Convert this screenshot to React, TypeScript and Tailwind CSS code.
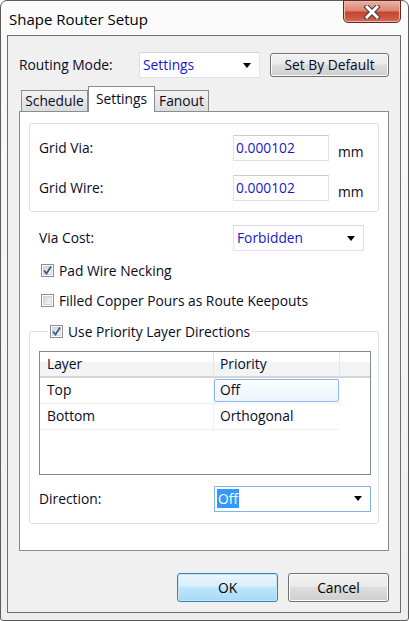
import React from 'react';

const FONT = { fontFamily: '"Open Sans", "Liberation Sans", sans-serif' };

function Arrow() {
  return (
    <svg width="8" height="5" viewBox="0 0 8 5" className="shrink-0">
      <path d="M0 0 H8 L4 5 Z" fill="#000" />
    </svg>
  );
}

function Combo({
  value,
  width,
  focused = false,
  highlighted = false,
}: {
  value: string;
  width: string;
  focused?: boolean;
  highlighted?: boolean;
}) {
  return (
    <div
      className={`${width} h-[26px] bg-white border flex items-center justify-between pl-[2px] pr-[8px] ${
        focused ? 'border-[#7eb4ea]' : 'border-[#dfe3e8] border-t-[#d2d6dc]'
      }`}
    >
      {highlighted ? (
        <span className="bg-[#3399ff] text-white px-[1px] leading-[19px]">{value}</span>
      ) : (
        <span className="text-[#1818c8] pl-[1px]">{value}</span>
      )}
      <Arrow />
    </div>
  );
}

function TextBox({ value }: { value: string }) {
  return (
    <div className="w-[96px] h-[26px] bg-white border border-[#dde1e6] border-t-[#c9ccd2] flex items-center pl-[2px] text-[#1818c8]">
      {value}
    </div>
  );
}

function Check({ checked }: { checked: boolean }) {
  return (
    <span className="relative w-[13px] h-[13px] shrink-0 border border-[#8e8f8f] bg-white p-[1px] flex">
      <span className="flex-1 border border-[#d0d3d8] bg-gradient-to-br from-[#d5d8dd] to-[#f7f7f7]" />
      {checked && (
        <svg width="11" height="11" viewBox="0 0 11 11" className="absolute left-[0px] top-[0px]">
          <path d="M2 5.5 L4.5 8.5 L9 1.5" fill="none" stroke="#3d5890" strokeWidth="1.8" />
        </svg>
      )}
    </span>
  );
}

function Button({ label, primary = false }: { label: string; primary?: boolean }) {
  return (
    <div
      className={`w-[101px] h-[29px] rounded-[3px] border flex items-center justify-center text-black ${
        primary
          ? 'border-[#3c7fb1] bg-[linear-gradient(#eaf6fd_0%,#d9f0fc_45%,#bee6fd_50%,#a7d9f5_100%)] shadow-[inset_0_0_0_1px_#c6e7f8]'
          : 'border-[#707070] bg-[linear-gradient(#f2f2f2_0%,#ebebeb_45%,#dddddd_50%,#cfcfcf_100%)] shadow-[inset_0_0_0_1px_#fcfcfc]'
      }`}
    >
      {label}
    </div>
  );
}

export default function App() {
  return (
    <div className="w-[409px] h-[621px] bg-white text-[13.8px] text-[#0a0a1e] leading-none" style={FONT}>
      <div className="w-full h-full rounded-t-[7px] rounded-b-[3px] border border-[#5b5b5b] bg-[linear-gradient(#fbfbfb,#eeeeee)] flex flex-col">
        {/* title bar */}
        <div className="h-[34px] flex justify-between pl-[8px] pr-[7px]">
          <span className="pt-[11px] text-[15px] text-[#000]">Shape Router Setup</span>
          <div className="w-[58px] h-[23px] -mt-px rounded-b-[5px] border border-[#5e2b22] bg-[linear-gradient(#eab3a7_0%,#dc8672_45%,#c7442f_55%,#d36a52_100%)] shadow-[inset_0_0_0_1px_#f0b8aa] flex items-center justify-center">
            <svg width="18" height="14" viewBox="0 0 18 14">
              <path d="M4 2 L14 12 M14 2 L4 12" stroke="#3b3b3b" strokeWidth="5" strokeLinecap="square" />
              <path d="M4 2 L14 12 M14 2 L4 12" stroke="#ffffff" strokeWidth="3" strokeLinecap="square" />
            </svg>
          </div>
        </div>

        {/* client area */}
        <div className="ml-[6px] mr-[7px] mb-[7px] flex-1 border border-[#6e6e6e] bg-[#f0f0f0] flex flex-col px-[11px]">
          <div className="mt-[16px] flex items-center">
            <span className="w-[120px]">Routing Mode:</span>
            <Combo value="Settings" width="w-[121px]" />
            <div className="ml-[10px] w-[119px] h-[24px] rounded-[3px] border border-[#707070] bg-[linear-gradient(#f2f2f2_0%,#ebebeb_45%,#dddddd_50%,#cfcfcf_100%)] shadow-[inset_0_0_0_1px_#fcfcfc] flex items-center justify-center">
              Set By Default
            </div>
          </div>

          {/* tabs */}
          <div className="mt-[8px] h-[25px] flex items-end pl-[2px]">
            <div className="w-[67px] h-[21px] border border-b-0 border-[#898c95] bg-[linear-gradient(#f2f2f2,#dcdcdc)] flex items-center justify-center">
              Schedule
            </div>
            <div className="relative z-10 w-[67px] h-[26px] -mb-px border border-b-0 border-[#898c95] bg-white flex items-start justify-center pt-[5px]">
              Settings
            </div>
            <div className="w-[54px] h-[21px] border border-b-0 border-l-0 border-[#898c95] bg-[linear-gradient(#f2f2f2,#dcdcdc)] flex items-center justify-center">
              Fanout
            </div>
          </div>

          <div className="h-[440px] border border-[#898c95] bg-white flex flex-col px-[9px] pt-[11px]">
            {/* grid group */}
            <div className="h-[89px] rounded-[3px] border border-[#d5dfe5] flex flex-col gap-[14px] pl-[9px] pt-[11px]">
              <div className="flex items-center">
                <span className="w-[194px]">Grid Via:</span>
                <TextBox value="0.000102" />
                <span className="ml-[9px] mt-[8px]">mm</span>
              </div>
              <div className="flex items-center">
                <span className="w-[194px]">Grid Wire:</span>
                <TextBox value="0.000102" />
                <span className="ml-[9px] mt-[8px]">mm</span>
              </div>
            </div>

            <div className="mt-[13px] flex items-center pl-[10px]">
              <span className="w-[194px]">Via Cost:</span>
              <Combo value="Forbidden" width="w-[131px]" />
            </div>

            <div className="mt-[13px] flex items-center gap-[5px] pl-[12px]">
              <Check checked />
              <span>Pad Wire Necking</span>
            </div>
            <div className="mt-[16px] flex items-center gap-[5px] pl-[12px]">
              <Check checked={false} />
              <span>Filled Copper Pours as Route Keepouts</span>
            </div>

            {/* priority group */}
            <fieldset className="mt-[16px] h-[200px] rounded-[3px] border border-[#d5dfe5] pl-[9px] pr-[7px] pb-[11px] flex flex-col">
              <legend className="ml-[9px] px-[2px] flex items-center gap-[5px] h-[16px]">
                <Check checked />
                <span>Use Priority Layer Directions</span>
              </legend>

              <div className="mt-[11px] h-[124px] border border-[#828790] bg-white flex flex-col">
                <div className="h-[26px] flex border-b-2 border-[#d5d5d5] bg-[linear-gradient(#ffffff_0%,#ffffff_40%,#f1f2f4_45%,#f3f4f6_100%)]">
                  <div className="w-[174px] border-r border-[#e5e5e5] pl-[7px] flex items-center">Layer</div>
                  <div className="w-[126px] border-r border-[#e5e5e5] pl-[6px] flex items-center">Priority</div>
                </div>
                <div className="h-[26px] flex border-b border-[#f0f0f0] w-[300px]">
                  <div className="w-[174px] border-r border-[#f0f0f0] pl-[7px] flex items-center">Top</div>
                  <div className="w-[126px] py-[1px] pr-[1px] flex">
                    <div className="flex-1 rounded-[2px] border border-[#8cb8ee] bg-[linear-gradient(#fafcff,#eef5fe)] pl-[5px] flex items-center">
                      Off
                    </div>
                  </div>
                </div>
                <div className="h-[26px] flex border-b border-[#f0f0f0] w-[300px]">
                  <div className="w-[174px] border-r border-[#f0f0f0] pl-[7px] flex items-center">Bottom</div>
                  <div className="w-[126px] pl-[6px] flex items-center">Orthogonal</div>
                </div>
              </div>

              <div className="mt-[11px] flex items-center">
                <span className="w-[175px]">Direction:</span>
                <Combo value="Off" width="w-[157px]" focused highlighted />
              </div>
            </fieldset>
          </div>

          <div className="mt-[22px] flex justify-end gap-[10px]">
            <Button label="OK" primary />
            <Button label="Cancel" />
          </div>
        </div>
      </div>
    </div>
  );
}
